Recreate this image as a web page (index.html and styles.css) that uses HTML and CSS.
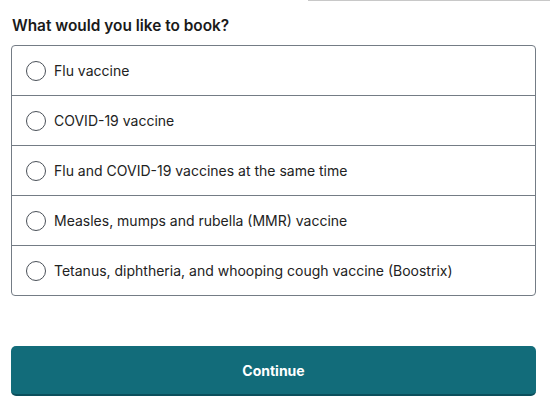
FILE: index.html
```html
<!DOCTYPE html>
<html>
<head>
<meta charset="utf-8">
<link rel="stylesheet" href="styles.css">
</head>
<body>
<div class="topbar"><div class="topline"></div></div>
<main class="page">
  <h2 class="question">What would you like to book?</h2>
  <div class="options">
    <label class="option"><span class="radio"></span><span>Flu vaccine</span></label>
    <label class="option"><span class="radio"></span><span>COVID-19 vaccine</span></label>
    <label class="option"><span class="radio"></span><span>Flu and COVID-19 vaccines at the same time</span></label>
    <label class="option"><span class="radio"></span><span>Measles, mumps and rubella (MMR) vaccine</span></label>
    <label class="option"><span class="radio"></span><span>Tetanus, diphtheria, and whooping cough vaccine (Boostrix)</span></label>
  </div>
  <button class="continue">Continue</button>
</main>
</body>
</html>
```
FILE: styles.css
```css
html, body {
  margin: 0;
  padding: 0;
  background: #fff;
  font-family: Inter, "Noto Sans", sans-serif;
  color: #1a1a1a;
}
.topbar {
  display: flex;
  justify-content: flex-end;
}
.topline {
  width: 242px;
  height: 1px;
  background: #c8c8c8;
}
.page {
  padding: 0 14px 0 11px;
}
.question {
  margin: 16px 0 10px 1px;
  font-size: 15.4px;
  font-weight: 600;
  line-height: 18px;
  color: #1a1a1a;
}
.options {
  border: 1px solid #747c85;
  border-radius: 4px;
  display: flex;
  flex-direction: column;
}
.option {
  display: flex;
  align-items: center;
  height: 49px;
  padding-left: 14px;
  gap: 8px;
  font-size: 14px;
  color: #222;
  border-bottom: 1px solid #747c85;
}
.option:last-child {
  border-bottom: none;
}
.radio {
  width: 20px;
  height: 20px;
  border: 1.3px solid #4a5058;
  border-radius: 50%;
  box-sizing: border-box;
  flex: none;
}
.continue {
  display: block;
  width: 100%;
  margin-top: 50px;
  height: 50px;
  border: none;
  border-bottom: 2px solid #0b4f5c;
  border-radius: 5px;
  background: #126c7a;
  color: #fff;
  font-family: Inter, "Noto Sans", sans-serif;
  font-size: 14px;
  font-weight: 700;
}
```
